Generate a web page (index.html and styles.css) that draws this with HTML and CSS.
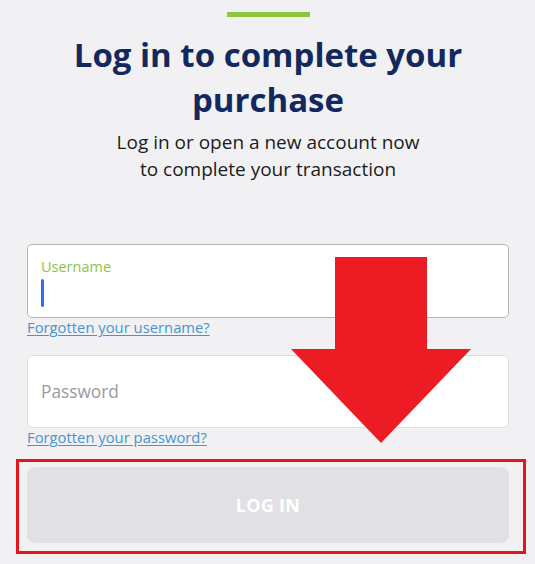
FILE: index.html
```html
<!DOCTYPE html>
<html lang="en">
<head>
<meta charset="utf-8">
<title>Log in</title>
<link rel="stylesheet" href="styles.css">
</head>
<body>
<main class="page">
  <div class="accent"></div>
  <h1 class="title">Log in to complete your purchase</h1>
  <p class="subtitle">Log in or open a new account now<br>to complete your transaction</p>

  <form class="form">
    <div class="field field-active">
      <span class="field-label">Username</span>
      <span class="caret"></span>
    </div>
    <a class="link" href="#">Forgotten your username?</a>

    <div class="field field-empty">
      <span class="placeholder">Password</span>
    </div>
    <a class="link" href="#">Forgotten your password?</a>

    <button class="login" type="button">LOG IN</button>
  </form>

  <div class="highlight"></div>
  <svg class="arrow" width="182" height="188" viewBox="0 0 182 188">
    <polygon points="44,0 136,0 136,92 180,92 90,186 0,92 44,92" fill="#ed1c24"/>
  </svg>
</main>
</body>
</html>
```

FILE: styles.css
```css
html, body {
  margin: 0;
  padding: 0;
  background: #f1f1f4;
}

.page {
  position: relative;
  width: 535px;
  height: 564px;
  box-sizing: border-box;
  padding: 12px 26px 0 27px;
  font-family: "Open Sans", "Noto Sans", sans-serif;
  overflow: hidden;
}

.accent {
  width: 83px;
  height: 5px;
  margin: 0 auto;
  background: #8dc63f;
}

.title {
  margin: 15px 0 0;
  font-size: 33px;
  line-height: 45px;
  font-weight: 700;
  color: #13295e;
  text-align: center;
  padding: 0 30px;
}

.subtitle {
  margin: 7px 0 0;
  font-size: 19px;
  line-height: 27px;
  color: #1c1c1c;
  text-align: center;
}

.form {
  display: flex;
  flex-direction: column;
  align-items: flex-start;
  margin-top: 61px;
}

.field {
  width: 100%;
  box-sizing: border-box;
  background: #fff;
  border-radius: 5px;
  display: flex;
  flex-direction: column;
  padding: 0 13px;
}

.field-active {
  height: 74px;
  border: 1px solid #b3b3b6;
  padding-top: 12px;
}

.field-label {
  font-size: 14.5px;
  line-height: 20px;
  color: #8cc43f;
}

.caret {
  display: block;
  width: 3px;
  height: 28px;
  margin-top: 2px;
  border-radius: 2px;
  background: #2e6cf0;
}

.field-empty {
  height: 73px;
  border: 1px solid #dedee2;
  justify-content: center;
  margin-top: 19px;
}

.placeholder {
  font-size: 17.3px;
  line-height: 24px;
  color: #9a9a9e;
}

.link {
  font-size: 14.8px;
  line-height: 18px;
  color: #4a94cc;
  text-decoration: underline;
  text-underline-offset: 2px;
}

.login {
  width: 100%;
  height: 76px;
  margin-top: 21px;
  border: none;
  border-radius: 8px;
  background: #e0e0e5;
  color: #ffffff;
  font-family: "Open Sans", "Noto Sans", sans-serif;
  font-size: 18px;
  font-weight: 700;
  letter-spacing: 0.3px;
}

.highlight {
  position: absolute;
  left: 16px;
  top: 459px;
  width: 504px;
  height: 89px;
  border: 3px solid #e8121b;
}

.arrow {
  position: absolute;
  left: 291px;
  top: 257px;
}
```
